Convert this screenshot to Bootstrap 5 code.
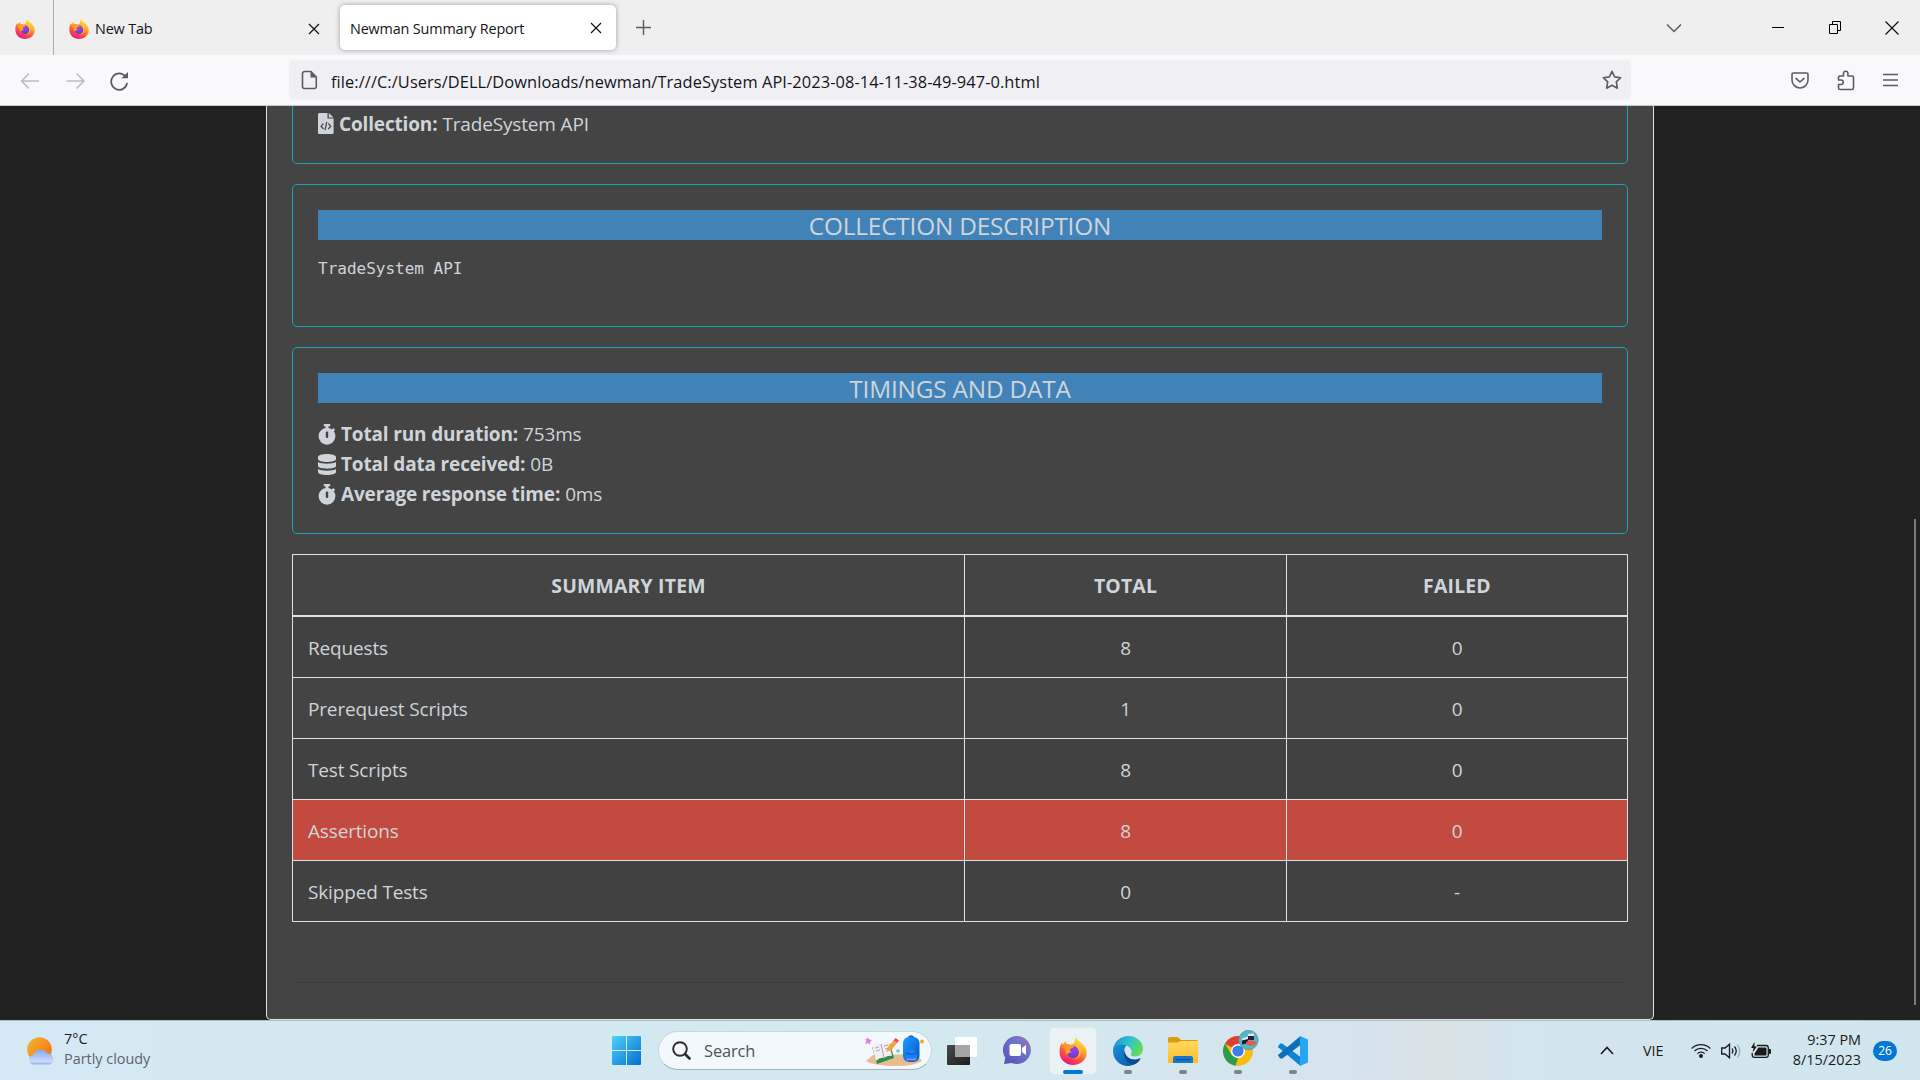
<!DOCTYPE html>
<html lang="en">
<head>
<meta charset="utf-8">
<title>Newman Summary Report</title>
<link href="https://cdn.jsdelivr.net/npm/bootstrap@5.3.0/dist/css/bootstrap.min.css" rel="stylesheet">
<style>
html,body{height:100%;overflow:hidden}
body{background:#222;color:#ced4da;font-family:"Open Sans","Noto Sans",sans-serif;font-size:19px;line-height:30px;letter-spacing:-.16px;font-variant-ligatures:none}
svg{display:block;flex:none}
.desk{width:1920px;height:1080px}
/* tab strip */
.tabstrip{height:55px;background:#efefef;color:#15141a;font-size:14.4px}
.pinned{width:54px;border-right:1px solid #aeaeae;padding:2px 0 0 15px}
.tab-idle{width:286px;padding:2px 20px 0 15px}
.tab-idle span{margin-left:6px}
.tab-live{width:276px;height:45px;margin-top:5px;background:#fff;border-radius:5px;box-shadow:0 0 5px rgba(0,0,0,.35);padding:1px 14px 0 10px}
.tab-idle span,.tab-live span{padding-top:1px}
.tab-new{padding:0 0 0 20px}
.wincontrols{padding-right:21px}
.win-min{margin-left:90px}
.win-max{margin-left:45px}
.win-close{margin-left:43px}
/* address bar */
.toolbar{height:51px;background:#f9f9fb;border-bottom:1px solid #c9c9cc;color:#5b5b66}
.navbtns{width:289px;padding:1px 0 0 20px;gap:25px}
.urlbox{width:1342px;height:40px;background:#f0f0f4;border-radius:5px;color:#15141a;font-size:16.4px;letter-spacing:.08px;padding:0 9px 0 12px}
.urlbox span{margin-left:13px;padding-top:3px}
.toolright{padding:0 21px 0 160px;gap:28px}
/* report */
.viewport{height:914px;overflow:hidden;background:#222}
.report{width:1388px;height:914px;margin-left:266px;background:#444;border:1px solid #dee2e6;border-top:0;border-radius:0 0 5px 5px;padding:0 25px}
.panel{border:1px solid #17a2b8;border-radius:5px;padding:25px;margin-bottom:20px}
.panel-first{height:58px;border-top:0;border-radius:0 0 5px 5px;padding:3px 25px 0}
.panel-desc{height:143px}
.panel-time{height:187px}
.panel strong{margin:0 5px}
.banner{background:#4183b8;height:30px;line-height:32px;font-size:24.4px;letter-spacing:-.2px;text-align:center;margin:0 0 16px;font-weight:400}
.desc{font-family:"DejaVu Sans Mono",monospace;font-size:16px;line-height:26px;letter-spacing:0;margin:0;overflow:visible}
.grid-sum{color:#ced4da;border-color:#dee2e6;table-layout:fixed;width:1336px;margin:0;border-collapse:collapse}
.col-item{width:672px}
.col-total{width:322px}
.grid-sum>:not(caption)>*>*{padding:16px 15px 14px;height:61px;border:1px solid #dee2e6;color:#ced4da;text-align:center;vertical-align:middle;box-shadow:none;background:#444}
.grid-sum>tbody>tr:nth-child(odd)>td{background:#414141}
.grid-sum>thead>tr>th{border-bottom-width:2px;font-size:19.4px;letter-spacing:.2px}
.grid-sum>tbody>tr>td:first-child{text-align:left}
.grid-sum>tbody>tr.hot>td{background:#c34a3f}
.rule{height:1px;background:#3d3d3d;margin-top:60px}
.scrollthumb{width:2px;height:486px;background:#7b7b7b;margin:413px 4px 0 auto}
/* taskbar */
.taskbar{height:60px;border-top:1px solid #aebcc4;background:linear-gradient(90deg,#d4e9f3 0,#d3e9f0 48%,#d5e5ee 64%,#d5e4ef 70%,#dae2e5 75%,#d3e5ed 79%,#d0e6ee 100%);color:#1b1b1b;font-size:14.4px;line-height:20px;letter-spacing:0}
.weather{width:599px;padding-left:27px;gap:9px}
.weather-text{margin-top:-3px}
.muted-ink{color:#5c6569}
.tile{width:55px;height:59px;position:relative}
.tile-live{width:48px;height:48px;background:#ebf2f6;border-radius:5px;border:1px solid #dde8ec}
.dotmark{position:absolute;left:24px;top:49px;width:8px;height:4px;border-radius:2px;background:#7b8488}
.dotmark.wide{left:18px;width:20px;background:#0078d4}
.searchpill{width:274px;height:39px;border-radius:20px;background:#f2f8fb;border:1px solid #c3d8df;border-bottom-color:#a4b4bb;color:#4d5357;font-size:16.4px;letter-spacing:-.1px;padding:0 7px 0 13px;margin:0 3px 0 4px}
.searchpill span{margin-left:13px}
.tray{padding-right:23px}
.lang{margin:0 27px 0 29px;width:21px}
.clock{width:81px;text-align:right;margin:-2px 12px 0 8px}
.count{width:24px;height:20px;border-radius:10px;background:#0078d4;color:#fff;font-size:12px;line-height:19px;text-align:center}
.ink{fill:none;stroke:#5b5b66;stroke-width:1.6;stroke-linecap:round;stroke-linejoin:round}
.ink.faint{stroke:#bcbcc3}
</style>
</head>
<body>
<svg width="0" height="0" class="position-absolute">
<defs>
<linearGradient id="fxb" x1=".8" y1="0" x2=".3" y2="1"><stop offset="0" stop-color="#fff44f"/><stop offset=".35" stop-color="#ffb029"/><stop offset=".65" stop-color="#ff5a36"/><stop offset="1" stop-color="#e5158b"/></linearGradient>
<radialGradient id="fxp" cx=".55" cy=".35" r=".7"><stop offset="0" stop-color="#a03cf0"/><stop offset="1" stop-color="#5b3fc9"/></radialGradient>
<linearGradient id="win" x1="0" y1="0" x2="1" y2="1"><stop offset="0" stop-color="#4fd0fb"/><stop offset="1" stop-color="#0270cf"/></linearGradient>
<linearGradient id="sun" x1="0" y1="0" x2="1" y2="1"><stop offset="0" stop-color="#f5b92e"/><stop offset="1" stop-color="#ee6a12"/></linearGradient>
<linearGradient id="cld" x1="0" y1="0" x2="0" y2="1"><stop offset="0" stop-color="#86a8ea"/><stop offset=".8" stop-color="#c9dbfa"/><stop offset="1" stop-color="#8caeea"/></linearGradient>
<linearGradient id="chat" x1="1" y1="0" x2="0" y2="1"><stop offset="0" stop-color="#a870a8"/><stop offset=".35" stop-color="#7274c8"/><stop offset="1" stop-color="#5350bd"/></linearGradient>
<linearGradient id="edg1" x1="0" y1=".2" x2="1" y2=".6"><stop offset="0" stop-color="#1f94d8"/><stop offset=".5" stop-color="#31c3cc"/><stop offset="1" stop-color="#67dd4f"/></linearGradient>
<linearGradient id="edg2" x1="0" y1="0" x2="1" y2="1"><stop offset="0" stop-color="#1a96dd"/><stop offset="1" stop-color="#0b4fa0"/></linearGradient>
<linearGradient id="fold" x1="0" y1="0" x2="0" y2="1"><stop offset="0" stop-color="#ffd95e"/><stop offset="1" stop-color="#fcbd27"/></linearGradient>
<linearGradient id="bag" x1="0" y1="0" x2="1" y2="1"><stop offset="0" stop-color="#1f9bff"/><stop offset="1" stop-color="#0456c9"/></linearGradient>
<linearGradient id="tvd" x1="0" y1="0" x2="1" y2="1"><stop offset="0" stop-color="#4a4a4a"/><stop offset="1" stop-color="#1d1d1d"/></linearGradient>
<symbol id="fox" viewBox="0 0 28 28"><path fill="url(#fxb)" d="M17.6 0C18 2.4 20 3.600 21.500 5.400C23 5.600 23.600 7 24 8.200C25 8.400 26 9.500 26.500 10.800C27.400 13 28 15.500 27.500 18C26.300 24 20.500 28 14 28C6.500 28 .6 22.500 .5 15C.4 11 1.200 8 3 5.500L3.600 8C4.500 6.500 5.600 5 7 4.200L7.400 7C9 6.800 10.600 7 12 7.800L15.500 6C15.200 3.500 16 1.400 17.600 0Z"/><circle cx="14.200" cy="15" r="5.900" fill="url(#fxp)"/><path fill="#ff9a2c" d="M3.600 9C6 7.200 9 7 11.500 8.300L15 9.400C14.500 11 12.500 11.200 11.500 12C10.500 13 11 14.500 12.500 14.800C11 17 8 15.500 7.500 18C6.500 15 6 12 3.600 9Z"/><path fill="#ffc22e" fill-opacity=".8" d="M17.500 5C21 8 23 12 21.500 17C20.500 20.500 17.500 22.500 14 22.300C20 22 21.500 15 18.500 11.500C16.500 10 16.300 7 17.500 5Z"/></symbol>
<symbol id="stop" viewBox="0 0 18 21"><path fill="#ced4da" d="M5.800 0H12.200V2.300H10.500V4C11.700 4.200 12.900 4.700 13.900 5.400L15.300 4L17.200 5.900L15.700 7.300C16.800 8.700 17.400 10.400 17.400 12.300A8.400 8.400 0 1 1 .6 12.300C.6 8.200 3.500 4.800 7.500 4V2.300H5.800Z"/><rect x="7.800" y="7.500" width="2.400" height="6.500" rx="1" fill="#444"/></symbol>
<symbol id="xx" viewBox="0 0 12 12"><path d="M1 1L11 11M11 1L1 11" stroke="currentColor" stroke-width="1.300" fill="none"/></symbol>
</defs>
</svg>
<div class="desk d-flex flex-column">
<header class="tabstrip d-flex">
 <div class="pinned d-flex align-items-center"><svg width="20" height="20"><use href="#fox"/></svg></div>
 <div class="tab-idle d-flex align-items-center"><svg width="20" height="20"><use href="#fox"/></svg><span class="me-auto">New Tab</span><svg width="12" height="12"><use href="#xx"/></svg></div>
 <div class="tab-live d-flex align-items-center"><span class="me-auto">Newman Summary Report</span><svg width="12" height="12"><use href="#xx"/></svg></div>
 <div class="tab-new d-flex align-items-center"><svg width="15" height="15" viewBox="0 0 15 15"><path d="M7.500 0V15M0 7.500H15" stroke="#5b5b66" stroke-width="1.400"/></svg></div>
 <div class="wincontrols ms-auto d-flex align-items-center">
  <svg width="16" height="10" viewBox="0 0 16 10"><path d="M1 1.500L8 8.500L15 1.500" fill="none" stroke="#5b5b66" stroke-width="1.500"/></svg>
  <svg class="win-min" width="12" height="12"><rect y="5" width="12" height="1" fill="#000"/></svg>
  <svg class="win-max" width="13" height="13" viewBox="0 0 13 13"><path d="M.5 3.500H8.500V12.500H.5ZM3.500 3.500V.5H11.500V9.500H8.500" fill="none" stroke="#000"/></svg>
  <svg class="win-close" width="14" height="14" viewBox="0 0 14 14"><path d="M.5 .5L13.500 13.500M13.500 .5L.5 13.500" stroke="#111" stroke-width="1.200"/></svg>
 </div>
</header>
<div class="toolbar d-flex align-items-center">
 <div class="navbtns d-flex align-items-center">
  <svg class="ink faint" width="20" height="18" viewBox="0 0 20 18"><path d="M18.500 9H1.500M8.500 2L1.500 9L8.500 16"/></svg>
  <svg class="ink faint" width="20" height="18" viewBox="0 0 20 18"><path d="M2 9H19M12 2L19 9L12 16"/></svg>
  <svg width="19" height="20" viewBox="0 0 19 20"><path d="M17 12.500A8 8.300 0 1 1 15.500 5.500" fill="none" stroke="#5b5b66" stroke-width="1.700" stroke-linecap="round"/><path d="M18 1V7.300H11.500Z" fill="#5b5b66"/></svg>
 </div>
 <div class="urlbox d-flex align-items-center"><svg width="17" height="20" viewBox="0 0 17 20"><path d="M3.500 1.500H10L15.300 7V16.500A2 2 0 0 1 13.300 18.500H3.500A2 2 0 0 1 1.500 16.500V3.500A2 2 0 0 1 3.500 1.500Z" fill="none" stroke="#5b5b66" stroke-width="1.600"/><path d="M9.500 1.500L15.300 7.500H9.500Z" fill="#5b5b66"/></svg><span class="me-auto">file:///C:/Users/DELL/Downloads/newman/TradeSystem API-2023-08-14-11-38-49-947-0.html</span>
 <svg class="ink" width="20" height="20" viewBox="0 0 20 20"><path d="M10 1.300L12.600 6.900L18.700 7.700L14.300 11.900L15.400 18.200L10 15.300L4.600 18.200L5.700 11.900L1.300 7.700L7.400 6.900Z"/></svg></div>
 <div class="toolright d-flex align-items-center">
  <svg class="ink" width="18" height="17" viewBox="0 0 18 17"><path d="M2.500 1H15.500A1.500 1.500 0 0 1 17 2.500V8A8 8 0 0 1 1 8V2.500A1.500 1.500 0 0 1 2.500 1ZM5 6.300L9 10L13 6.300"/></svg>
  <svg class="ink" width="18" height="21" viewBox="0 0 18 21"><path d="M1.500 10V7.500A1.500 1.500 0 0 1 3 6H6.500V3.500A2.200 2.200 0 0 1 10.900 3.500V6H15A1.500 1.500 0 0 1 16.500 7.500V18A1.500 1.500 0 0 1 15 19.500H3A1.500 1.500 0 0 1 1.500 18V14.500H4A2.200 2.200 0 0 0 4 10Z"/></svg>
  <svg width="15" height="14" viewBox="0 0 15 14"><path d="M0 1.500H15M0 7H15M0 12.500H15" stroke="#5b5b66" stroke-width="1.500"/></svg>
 </div>
</div>
<main class="viewport d-flex">
 <div class="report">
  <section class="panel panel-first d-flex align-items-start"><svg width="16" height="21" viewBox="0 0 16 21" class="mt-1"><path fill="#ced4da" d="M1.500 0H9.500V5.500H15.600V19.500A1.400 1.400 0 0 1 14.200 21H1.500A1.400 1.400 0 0 1 0 19.500V1.400A1.400 1.400 0 0 1 1.500 0ZM10.800 0L15.600 4.500H10.800Z"/><path d="M5.500 10.500L3 13.200L5.500 16M10.300 10.500L12.800 13.200L10.300 16M8.800 9L7 17.200" fill="none" stroke="#444" stroke-width="1.200"/></svg><strong>Collection:</strong><span>TradeSystem API</span></section>
  <section class="panel panel-desc"><h5 class="banner">COLLECTION DESCRIPTION</h5><pre class="desc">TradeSystem API</pre></section>
  <section class="panel panel-time"><h5 class="banner">TIMINGS AND DATA</h5>
   <div class="d-flex align-items-center"><svg width="18" height="21"><use href="#stop"/></svg><strong>Total run duration:</strong><span>753ms</span></div>
   <div class="d-flex align-items-center"><svg width="18" height="21" viewBox="0 0 18 21"><path fill="#ced4da" d="M0 3C0-1 18-1 18 3V5C18 9 0 9 0 5ZM0 8C3 10.300 15 10.300 18 8V12C18 15.500 0 15.500 0 12ZM0 15C3 17.300 15 17.300 18 15V18C18 22 0 22 0 18Z"/></svg><strong>Total data received:</strong><span>0B</span></div>
   <div class="d-flex align-items-center"><svg width="18" height="21"><use href="#stop"/></svg><strong>Average response time:</strong><span>0ms</span></div>
  </section>
  <table class="table grid-sum">
   <colgroup><col class="col-item"><col class="col-total"><col></colgroup>
   <thead><tr><th>SUMMARY ITEM</th><th>TOTAL</th><th>FAILED</th></tr></thead>
   <tbody>
    <tr><td>Requests</td><td>8</td><td>0</td></tr>
    <tr><td>Prerequest Scripts</td><td>1</td><td>0</td></tr>
    <tr><td>Test Scripts</td><td>8</td><td>0</td></tr>
    <tr class="hot"><td>Assertions</td><td>8</td><td>0</td></tr>
    <tr><td>Skipped Tests</td><td>0</td><td>-</td></tr>
   </tbody>
  </table>
  <div class="rule"></div>
 </div>
 <div class="scrollthumb"></div>
</main>
<footer class="taskbar d-flex align-items-center">
 <div class="weather d-flex align-items-center"><svg width="28" height="28" viewBox="0 0 28 28"><circle cx="12.500" cy="12.500" r="12.300" fill="url(#sun)"/><path fill="url(#cld)" d="M6.500 27.500A4.700 4.700 0 0 1 6 18.200A8 8 0 0 1 20.500 16.600A5.600 5.600 0 0 1 22.500 27.500Z"/></svg><div class="weather-text"><div>7°C</div><div class="muted-ink">Partly cloudy</div></div></div>
 <div class="tile d-flex align-items-center justify-content-center"><svg width="29" height="29" viewBox="0 0 29 29"><path fill="url(#win)" d="M1 0H14V14H0V1A1 1 0 0 1 1 0ZM15 0H28A1 1 0 0 1 29 1V14H15ZM0 15H14V29H1A1 1 0 0 1 0 28ZM15 15H29V28A1 1 0 0 1 28 29H15Z"/></svg></div>
 <div class="searchpill d-flex align-items-center"><svg width="19" height="19" viewBox="0 0 19 19" fill="none" stroke="#2b2b2b"><circle cx="8" cy="8" r="6.800" stroke-width="1.900"/><path d="M13 13L17.500 17.500" stroke-width="2.600" stroke-linecap="round"/></svg><span class="me-auto">Search</span>
 <svg width="60" height="32" viewBox="0 0 60 32"><path d="M2 26L9 20L52 19L58 26Q50 31 34 31Q10 31 2 26Z" fill="#e6bd90"/><path d="M8 12L26 9L30 23L13 29Z" fill="#2f8f4a"/><path d="M8 11Q13 7 17 9Q21 6 25 7L28 21Q24 20 20 23Q16 22 12 26Z" fill="#f2eef4"/><path d="M17 9L20 23M11 13L15 12M12 16L16 15M20 11L24 10M21 14L25 13" stroke="#a9a2b4"/><path d="M22 17L24 12L29.500 5.500L33 8L27.500 15Z" fill="#f7a33a"/><path d="M29.500 5.500L31.500 3L35 5.500L33 8Z" fill="#ef4d4d"/><path d="M3.500 2L5.500 4.500L8 5L6 7L6.500 9.500L4 8L1 9L2.500 6L1 4L3.500 4Z" fill="#dd78f0"/><circle cx="34" cy="16" r="1.800" fill="#54cdf2"/><circle cx="58" cy="6.500" r="1.900" fill="#f6a813"/><path d="M43.500 4Q47-2 50.500 4" fill="none" stroke="#0757b8" stroke-width="1.500"/><rect x="39" y="2" width="16.500" height="25" rx="6" fill="url(#bag)"/><path d="M42 19Q47.500 9 53 19V25H42Z" fill="#1683f5"/><path d="M42 18Q47.500 21 53 18" fill="none" stroke="#0a50b5"/><path d="M42 24.500H52" stroke="#b77ef0" stroke-width="1.600"/></svg></div>
 <div class="tile d-flex align-items-center justify-content-center"><svg width="31" height="28" viewBox="0 0 31 28"><rect y="8" width="23" height="20" rx="1" fill="url(#tvd)"/><rect x="8" width="22" height="20" rx="1" fill="#fff" fill-opacity=".9"/><rect x="8" y="8" width="15" height="12" fill="#a5a5a5"/></svg></div>
 <div class="tile d-flex align-items-center justify-content-center"><svg width="29" height="29" viewBox="0 0 29 29"><path fill="url(#chat)" d="M14.500 0A14 14 0 1 1 8.500 26.900L1 28L2.300 21.600A14 14 0 0 1 14.500 0Z"/><rect x="6.500" y="8" width="11.500" height="12" rx="2" fill="#fff"/><path d="M19 12L23 9V19L19 16Z" fill="#fff"/></svg></div>
 <div class="tile d-flex align-items-center justify-content-center"><div class="tile-live d-flex align-items-center justify-content-center"><svg width="28" height="28"><use href="#fox"/></svg></div><i class="dotmark wide"></i></div>
 <div class="tile d-flex align-items-center justify-content-center"><svg width="30" height="30" viewBox="0 0 30 30"><path fill="url(#edg2)" d="M.1 14C.8 6 7 3 14 9C10 12 10 20 17 23C21 24.600 25 23.500 27.500 22C26 26 21 30 15 30C6 30-.6 22.500 .1 14Z"/><path fill="url(#edg1)" d="M.3 13C1.500 5 8 0 15.200 0C24 0 30 6 30 13C30 17.500 26.500 20.500 22.500 20.500C19.500 20.500 17 19.400 18 18C19.500 16 18.700 12 14 9.700C9 7.500 2.500 8 .3 13Z"/><path d="M11.500 14C9.500 22 15 28.500 21 28.300C24 27.500 26.700 25 27.600 22C20 26 12 22 11.500 14Z" fill="#0d4a94"/></svg><i class="dotmark"></i></div>
 <div class="tile d-flex align-items-center justify-content-center"><svg width="30" height="27" viewBox="0 0 30 27"><path d="M0 1.500A1.500 1.500 0 0 1 1.500 0H9.500L13 3H28.500A1.500 1.500 0 0 1 30 4.500V10H0Z" fill="#dd9a0b"/><path d="M0 5.500H9L13 4H29A1 1 0 0 1 30 5V26H0Z" fill="url(#fold)"/><path d="M5 26V21A2 2 0 0 1 7 19H23A2 2 0 0 1 25 21V26Z" fill="#1478cf"/><rect x="8" y="22" width="14" height="1.200" fill="#0b4f96"/></svg><i class="dotmark"></i></div>
 <div class="tile d-flex align-items-center justify-content-center"><svg width="42" height="42" viewBox="0 0 42 42"><circle cx="21" cy="21" r="15" fill="#f9bc12"/><path d="M21 21L8 13.500A15 15 0 0 1 34 13.500H21Z" fill="#dc3f33"/><path d="M8 13.500L14.500 24.700L21 28L18.500 35.800A15 15 0 0 1 8 13.500Z" fill="#2c9b4b"/><circle cx="21" cy="21" r="7" fill="#fff"/><circle cx="21" cy="21" r="5.600" fill="#3a7ee8"/><circle cx="31.500" cy="10" r="9.600" fill="#47bccb" stroke="#7a8e96"/><path d="M25 9L31 7V13L25 14.500Z" fill="#1f1a34"/><path d="M31 5L37 4.500V10H31Z" fill="#27203c"/><path d="M25 8.500L31 6.500V9L25 10.500ZM31 4L37 3.500V6H31Z" fill="#eee4e6"/><ellipse cx="34" cy="13" rx="5" ry="2.600" fill="#f0564e"/></svg><i class="dotmark"></i></div>
 <div class="tile d-flex align-items-center justify-content-center"><svg width="30" height="30" viewBox="0 0 30 30"><path d="M0 10.400L2.200 7.600L4.300 7.500L22.500 21V30L.2 11.200Z" fill="#0b86d3"/><path d="M0 19.600L2.200 22.400L4.300 22.500L22.500 9V0L.2 18.800Z" fill="#0a70b8"/><path d="M22 0L30 3.500V26.500L22 30Z" fill="#27a5f2"/></svg><i class="dotmark"></i></div>
 <div class="tray ms-auto d-flex align-items-center">
  <svg width="14" height="9" viewBox="0 0 14 9"><path d="M1 8L7 1.500L13 8" fill="none" stroke="#1b1b1b" stroke-width="1.600"/></svg>
  <span class="lang">VIE</span>
  <svg width="20" height="15" viewBox="0 0 20 15" fill="none" stroke="#1b1b1b" stroke-width="1.300"><path d="M.7 5.500A13 13 0 0 1 19.300 5.500M3.500 8A9.300 9.300 0 0 1 16.500 8M6.300 10.600A5.300 5.300 0 0 1 13.700 10.600"/><circle cx="10" cy="13" r="1.300" fill="#1b1b1b"/></svg>
  <svg class="mx-2 px-0" width="24" height="16" viewBox="-2 0 24 16" fill="none" stroke="#1b1b1b" stroke-width="1.300"><path d="M.7 5H4L8.500 1.200V14.800L4 11H.7ZM11 5.500Q12.700 8 11 10.500M13.500 3.500Q17 8 13.500 12.500"/><path d="M16.500 1.500Q21 8 16.500 14.500" stroke="#a3adb2"/></svg>
  <svg width="21" height="17" viewBox="0 0 21 17"><path d="M6 3.500H15A2.300 2.300 0 0 1 17.300 5.800V13A2.300 2.300 0 0 1 15 15.300H3.500A2.300 2.300 0 0 1 1.200 13V11" fill="none" stroke="#1b1b1b" stroke-width="1.300"/><path d="M7.500 5.500H14.500A1 1 0 0 1 15.500 6.500V12.500A1 1 0 0 1 14.500 13.500H3.500V11.500ZM18 7H19A1 1 0 0 1 20 8V11A1 1 0 0 1 19 12H18ZM3.500 0L0 6H2.500L1.500 10.500L6 4.500H3.500Z" fill="#1b1b1b"/></svg>
  <div class="clock"><div>9:37 PM</div><div>8/15/2023</div></div>
  <div class="count">26</div>
 </div>
</footer>
</div>
<script src="https://cdn.jsdelivr.net/npm/bootstrap@5.3.0/dist/js/bootstrap.bundle.min.js"></script>
</body>
</html>
